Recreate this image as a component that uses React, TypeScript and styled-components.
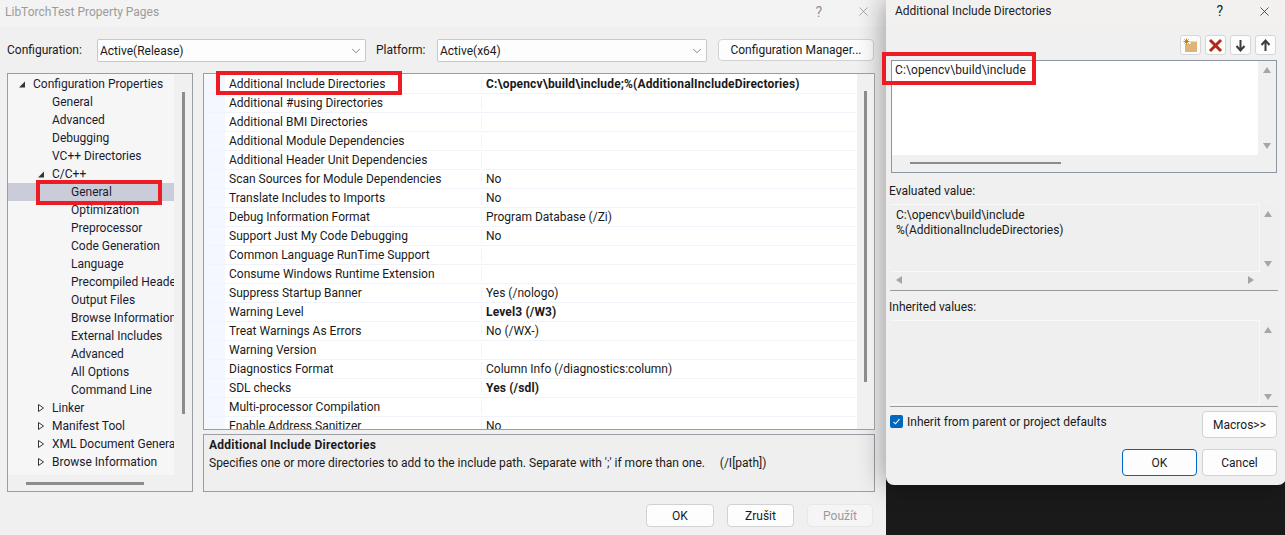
import { ChevronDown, X } from "lucide-react";
import styled, { createGlobalStyle } from "styled-components";

const treeItems = [
  { label: "Configuration Properties", level: 0, arrow: "open" },
  { label: "General", level: 1 },
  { label: "Advanced", level: 1 },
  { label: "Debugging", level: 1 },
  { label: "VC++ Directories", level: 1 },
  { label: "C/C++", level: 1, arrow: "open" },
  { label: "General", level: 2, selected: true },
  { label: "Optimization", level: 2 },
  { label: "Preprocessor", level: 2 },
  { label: "Code Generation", level: 2 },
  { label: "Language", level: 2 },
  { label: "Precompiled Headers", level: 2 },
  { label: "Output Files", level: 2 },
  { label: "Browse Information", level: 2 },
  { label: "External Includes", level: 2 },
  { label: "Advanced", level: 2 },
  { label: "All Options", level: 2 },
  { label: "Command Line", level: 2 },
  { label: "Linker", level: 1, arrow: "closed" },
  { label: "Manifest Tool", level: 1, arrow: "closed" },
  { label: "XML Document Generator", level: 1, arrow: "closed" },
  { label: "Browse Information", level: 1, arrow: "closed" },
];

const properties = [
  { name: "Additional Include Directories", value: "C:\\opencv\\build\\include;%(AdditionalIncludeDirectories)", bold: true },
  { name: "Additional #using Directories", value: "" },
  { name: "Additional BMI Directories", value: "" },
  { name: "Additional Module Dependencies", value: "" },
  { name: "Additional Header Unit Dependencies", value: "" },
  { name: "Scan Sources for Module Dependencies", value: "No" },
  { name: "Translate Includes to Imports", value: "No" },
  { name: "Debug Information Format", value: "Program Database (/Zi)" },
  { name: "Support Just My Code Debugging", value: "No" },
  { name: "Common Language RunTime Support", value: "" },
  { name: "Consume Windows Runtime Extension", value: "" },
  { name: "Suppress Startup Banner", value: "Yes (/nologo)" },
  { name: "Warning Level", value: "Level3 (/W3)", bold: true },
  { name: "Treat Warnings As Errors", value: "No (/WX-)" },
  { name: "Warning Version", value: "" },
  { name: "Diagnostics Format", value: "Column Info (/diagnostics:column)" },
  { name: "SDL checks", value: "Yes (/sdl)", bold: true },
  { name: "Multi-processor Compilation", value: "" },
  { name: "Enable Address Sanitizer", value: "No" },
];

const App = () => {
  return (
    <Page>
      <GlobalStyle />
      <MainWindow>
        <TitleBar>
          <MainTitle>LibTorchTest Property Pages</MainTitle>
          <TitleActions $gap={34} $right={15}>
            <HelpMark $muted>?</HelpMark>
            <X size={15} strokeWidth={1.2} color="#8f8f8f" />
          </TitleActions>
        </TitleBar>
        <ConfigRow>
          <ConfigLabel $width={90}>Configuration:</ConfigLabel>
          <SelectBox $width={269}>
            Active(Release)
            <ChevronDown size={14} strokeWidth={1.2} color="#555" />
          </SelectBox>
          <ConfigLabel $width={61} $left={10}>Platform:</ConfigLabel>
          <SelectBox $width={270}>
            Active(x64)
            <ChevronDown size={14} strokeWidth={1.2} color="#555" />
          </SelectBox>
          <Button $width={156} $height={22} $left={11}>Configuration Manager...</Button>
        </ConfigRow>
        <Panels>
          <TreePanel>
            <TreeBody>
              {treeItems.map((item, index) => (
                <TreeRow key={index} $selected={item.selected}>
                  <TreeLabel $level={item.level}>
                    {item.arrow && (
                      <TreeArrow $level={item.level} viewBox="0 0 8 10" width="8" height="10">
                        {item.arrow === "open" ? (
                          <path d="M7 2.5V8.5H1z" fill="#333" />
                        ) : (
                          <path d="M1.5 1.5L6.5 5L1.5 8.5z" fill="#fff" stroke="#333" strokeWidth="1" />
                        )}
                      </TreeArrow>
                    )}
                    {item.label}
                  </TreeLabel>
                </TreeRow>
              ))}
            </TreeBody>
            <TreeVThumb />
            <TreeHThumb />
            <TreeMark />
          </TreePanel>
          <RightColumn>
            <GridPanel>
              <GridRows>
                {properties.map((prop) => (
                  <GridRow key={prop.name}>
                    <NameCell>{prop.name}</NameCell>
                    <ValueCell $bold={prop.bold}>{prop.value}</ValueCell>
                  </GridRow>
                ))}
              </GridRows>
              <GridScroll>
                <GridThumb />
              </GridScroll>
              <GridMark />
            </GridPanel>
            <DescriptionPanel>
              <DescriptionTitle>Additional Include Directories</DescriptionTitle>
              <DescriptionText>
                {"Specifies one or more directories to add to the include path. Separate with ';' if more than one.     (/I[path])"}
              </DescriptionText>
            </DescriptionPanel>
          </RightColumn>
        </Panels>
        <MainFooter>
          <Button $width={68} $height={23}>OK</Button>
          <Button $width={67} $height={23}>Zrušit</Button>
          <Button $width={66} $height={23} $disabled>Použít</Button>
        </MainFooter>
      </MainWindow>

      <SideColumn>
        <Dialog>
          <DialogTitleBar>
            <DialogTitle>Additional Include Directories</DialogTitle>
            <TitleActions $gap={34} $right={14}>
              <HelpMark>?</HelpMark>
              <X size={15} strokeWidth={1.2} color="#222" />
            </TitleActions>
          </DialogTitleBar>
          <DialogBody>
            <Toolbar>
              <ToolButton>
                <svg width="15" height="15" viewBox="0 0 15 15">
                  <path d="M2 6h5.5V3.5H14V14H2z" fill="#deb479" />
                  <path d="M3.5 0.5v6M0.5 3.5h6M1.4 1.4l4.2 4.2M5.6 1.4L1.4 5.6" stroke="#d0810f" strokeWidth="1" />
                </svg>
              </ToolButton>
              <ToolButton>
                <svg width="15" height="15" viewBox="0 0 15 15">
                  <path d="M2 2l11 11M13 2L2 13" stroke="#b02a1c" strokeWidth="3" />
                </svg>
              </ToolButton>
              <ToolButton>
                <svg width="13" height="13" viewBox="0 0 13 13">
                  <path d="M6.5 1v10M2.5 7l4 4.5 4-4.5" stroke="#3c3c3c" strokeWidth="2" fill="none" />
                </svg>
              </ToolButton>
              <ToolButton>
                <svg width="13" height="13" viewBox="0 0 13 13">
                  <path d="M6.5 12V2M2.5 6l4-4.5 4 4.5" stroke="#3c3c3c" strokeWidth="2" fill="none" />
                </svg>
              </ToolButton>
            </Toolbar>
            <EditorBox>
              <EditorPane>C:\opencv\build\include</EditorPane>
              <ScrollArrow $dir="up" $x={371} $y={6} />
              <ScrollArrow $dir="down" $x={371} $y={82} />
              <EditorThumb />
              <EditorMark />
            </EditorBox>
            <FieldLabel $top={8}>Evaluated value:</FieldLabel>
            <ValueBox>
              <ValuePane $height={68}>
                C:\opencv\build\include
                <br />
                %(AdditionalIncludeDirectories)
              </ValuePane>
              <ScrollArrow $dir="up" $x={374} $y={7} />
              <ScrollArrow $dir="down" $x={374} $y={57} />
              <ScrollArrow $dir="left" $x={6} $y={72} />
              <ScrollArrow $dir="right" $x={358} $y={72} />
            </ValueBox>
            <FieldLabel $top={6}>Inherited values:</FieldLabel>
            <ValueBox>
              <ValuePane $height={85} />
              <ScrollArrow $dir="up" $x={374} $y={7} />
              <ScrollArrow $dir="down" $x={374} $y={74} />
            </ValueBox>
            <OptionsRow>
              <CheckLabel>
                <CheckBox>
                  <svg width="13" height="13" viewBox="0 0 13 13">
                    <path d="M3.5 6.8l2 2 4-4.6" stroke="#fff" strokeWidth="1.1" fill="none" />
                  </svg>
                </CheckBox>
                Inherit from parent or project defaults
              </CheckLabel>
              <Button $width={75} $height={27}>Macros&gt;&gt;</Button>
            </OptionsRow>
            <DialogFooter>
              <Button $width={75} $height={27} $primary>OK</Button>
              <Button $width={75} $height={27}>Cancel</Button>
            </DialogFooter>
          </DialogBody>
        </Dialog>
      </SideColumn>
    </Page>
  );
};

const GlobalStyle = createGlobalStyle`
  html, body {
    margin: 0;
    padding: 0;
    background: #1a1a1a;
  }
  * {
    box-sizing: border-box;
  }
`;

const Page = styled.div`
  display: flex;
  width: 1285px;
  height: 535px;
  overflow: hidden;
  font-family: Roboto, "Liberation Sans", sans-serif;
  font-size: 12px;
  color: #1a1a1a;
`;

const MainWindow = styled.div`
  width: 886px;
  flex-shrink: 0;
  display: flex;
  flex-direction: column;
  background: #f0f0f0;
`;

const TitleBar = styled.div`
  height: 27px;
  display: flex;
  align-items: center;
  justify-content: space-between;
  padding: 0 0 4px 5px;
  background: #f3f3f3;
`;

const MainTitle = styled.span`
  color: #9b9b9b;
`;

const TitleActions = styled.div<{ $gap: number; $right: number }>`
  display: flex;
  align-items: center;
  gap: ${(p) => p.$gap}px;
  padding-right: ${(p) => p.$right}px;
`;

const HelpMark = styled.span<{ $muted?: boolean }>`
  font-size: 14px;
  margin-left: -2px;
  color: ${(p) => (p.$muted ? "#8f8f8f" : "#222")};
`;

const ConfigRow = styled.div`
  display: flex;
  align-items: flex-start;
  padding: 12px 0 0 7px;
  height: 46px;
  flex-shrink: 0;
`;

const ConfigLabel = styled.span<{ $width: number; $left?: number }>`
  width: ${(p) => p.$width}px;
  margin-left: ${(p) => p.$left || 0}px;
  line-height: 22px;
`;

const SelectBox = styled.div<{ $width: number }>`
  width: ${(p) => p.$width}px;
  height: 23px;
  display: flex;
  align-items: center;
  justify-content: space-between;
  padding: 0 2px 0 2px;
  background: #fdfdfd;
  border: 1px solid #c8c8c8;
  border-radius: 2px;
`;

const Button = styled.div<{
  $width: number;
  $height: number;
  $left?: number;
  $primary?: boolean;
  $disabled?: boolean;
}>`
  width: ${(p) => p.$width}px;
  height: ${(p) => p.$height}px;
  margin-left: ${(p) => p.$left || 0}px;
  flex-shrink: 0;
  display: flex;
  align-items: center;
  justify-content: center;
  border: 1px solid ${(p) => (p.$primary ? "#0067c0" : p.$disabled ? "#e8e8e8" : "#d2d2d2")};
  border-radius: 4px;
  background: ${(p) => (p.$disabled ? "#f5f5f5" : "#fdfdfd")};
  color: ${(p) => (p.$disabled ? "#9a9a9a" : "#1a1a1a")};
`;

const Panels = styled.div`
  display: flex;
  gap: 10px;
  padding: 0 11px 0 7px;
  height: 419px;
`;

const TreePanel = styled.div`
  position: relative;
  width: 186px;
  flex-shrink: 0;
  border: 1px solid #9a9ea4;
  background: #f0f0f0;
`;

const TreeBody = styled.div`
  width: 166px;
  height: 401px;
  overflow: hidden;
  padding-top: 1px;
  background: #f6f6f6;
`;

const TreeRow = styled.div<{ $selected?: boolean }>`
  height: 18px;
  display: flex;
  align-items: center;
  background: ${(p) => (p.$selected ? "#cbccd9" : "transparent")};
`;

const TreeLabel = styled.span<{ $level: number }>`
  position: relative;
  padding-left: ${(p) => 25 + p.$level * 19}px;
  white-space: nowrap;
  color: #1b1b30;
`;

const TreeArrow = styled.svg<{ $level: number }>`
  position: absolute;
  top: 50%;
  left: ${(p) => 10 + p.$level * 19}px;
  transform: translateY(-50%);
`;

const TreeVThumb = styled.div`
  position: absolute;
  left: 174px;
  top: 18px;
  width: 3px;
  height: 322px;
  background: #8c8c8c;
`;

const TreeHThumb = styled.div`
  position: absolute;
  left: 18px;
  top: 408px;
  width: 118px;
  height: 3px;
  background: #8c8c8c;
`;

const RedFrame = styled.div`
  position: absolute;
  border: 4px solid #ed1c24;
  pointer-events: none;
`;

const TreeMark = styled(RedFrame)`
  left: 28px;
  top: 106px;
  width: 126px;
  height: 25px;
`;

const RightColumn = styled.div`
  flex: 1;
  display: flex;
  flex-direction: column;
  gap: 4px;
`;

const GridPanel = styled.div`
  position: relative;
  height: 357px;
  display: flex;
  border: 1px solid #9a9ea4;
  background: #f0f0f0;
`;

const GridRows = styled.div`
  width: 653px;
  overflow: hidden;
  padding-top: 1px;
  background: #fff;
`;

const GridRow = styled.div`
  height: 19px;
  display: flex;
  align-items: center;
  background: linear-gradient(90deg, #f4f7fd 21px, #fff 21px);
  border-bottom: 1px solid #f0f3fa;
`;

const NameCell = styled.div`
  width: 278px;
  flex-shrink: 0;
  padding-left: 25px;
  white-space: nowrap;
  overflow: hidden;
  border-right: 1px solid #f0f3fa;
`;

const ValueCell = styled.div<{ $bold?: boolean }>`
  padding-left: 4px;
  font-weight: ${(p) => (p.$bold ? 700 : 400)};
  letter-spacing: ${(p) => (p.$bold ? "0.15px" : "0")};
`;

const GridScroll = styled.div`
  flex: 1;
  display: flex;
  justify-content: center;
  padding-top: 17px;
`;

const GridThumb = styled.div`
  width: 3px;
  height: 291px;
  background: #8c8c8c;
`;

const GridMark = styled(RedFrame)`
  left: 12px;
  top: -3px;
  width: 186px;
  height: 24px;
`;

const DescriptionPanel = styled.div`
  flex: 1;
  padding: 1px 5px;
  border: 1px solid #9a9ea4;
  background: #efefef;
`;

const DescriptionTitle = styled.div`
  height: 18px;
  line-height: 18px;
  font-weight: 700;
  letter-spacing: 0.25px;
`;

const DescriptionText = styled.div`
  height: 18px;
  line-height: 18px;
  white-space: pre;
`;

const MainFooter = styled.div`
  display: flex;
  justify-content: flex-end;
  gap: 13px;
  padding: 12px 13px 0 0;
`;

const SideColumn = styled.div`
  flex: 1;
  background: #1a1a1a;
`;

const Dialog = styled.div`
  height: 485px;
  display: flex;
  flex-direction: column;
  background: #f0f0f0;
  border-radius: 0 0 8px 8px;
  box-shadow: -3px 0 26px rgba(0, 0, 0, 0.35);
`;

const DialogTitleBar = styled(TitleBar)`
  height: 26px;
  padding-left: 9px;
  background: #f3f1f0;
`;

const DialogTitle = styled.span`
  color: #222;
`;

const DialogBody = styled.div`
  flex: 1;
  display: flex;
  flex-direction: column;
  padding: 9px 8px 0 4px;
`;

const Toolbar = styled.div`
  display: flex;
  justify-content: flex-end;
  gap: 4px;
  height: 20px;
  margin-bottom: 5px;
  padding-right: 2px;
`;

const ToolButton = styled.div`
  width: 21px;
  height: 20px;
  display: flex;
  align-items: center;
  justify-content: center;
  background: #fdfdfd;
  border: 1px solid #d6d6d6;
  border-radius: 3px;
`;

const EditorBox = styled.div`
  position: relative;
  height: 113px;
  margin-left: 1px;
  width: 386px;
  border: 1px solid #8c95a0;
  background: #f0f0f0;
`;

const EditorPane = styled.div`
  width: 366px;
  height: 94px;
  padding: 2px 3px;
  letter-spacing: 0.1px;
  background: #fff;
`;

const EditorThumb = styled.div`
  position: absolute;
  left: 18px;
  top: 101px;
  width: 151px;
  height: 2px;
  background: #8c8c8c;
`;

const EditorMark = styled(RedFrame)`
  left: -10px;
  top: -9px;
  width: 154px;
  height: 33px;
`;

const FieldLabel = styled.div<{ $top: number }>`
  height: 20px;
  line-height: 20px;
  margin-top: ${(p) => p.$top}px;
  margin-bottom: 3px;
  margin-left: -1px;
`;

const ValueBox = styled.div`
  position: relative;
  height: 87px;
  width: 388px;
  border-bottom: 1px solid #9a9a9a;
  background: #efefef;
`;

const ValuePane = styled.div<{ $height: number }>`
  width: 370px;
  height: ${(p) => p.$height}px;
  padding: 3px 5px;
  line-height: 15px;
  border: 1px solid #f8f8f8;
  border-left-color: #efefef;
`;

const ScrollArrow = styled.i<{ $dir: "up" | "down" | "left" | "right"; $x: number; $y: number }>`
  position: absolute;
  left: ${(p) => p.$x}px;
  top: ${(p) => p.$y}px;
  width: 0;
  height: 0;
  ${(p) =>
    p.$dir === "up"
      ? "border-left: 4px solid transparent; border-right: 4px solid transparent; border-bottom: 6px solid #a6a6a6;"
      : p.$dir === "down"
        ? "border-left: 4px solid transparent; border-right: 4px solid transparent; border-top: 6px solid #a6a6a6;"
        : p.$dir === "left"
          ? "border-top: 4px solid transparent; border-bottom: 4px solid transparent; border-right: 6px solid #a6a6a6;"
          : "border-top: 4px solid transparent; border-bottom: 4px solid transparent; border-left: 6px solid #a6a6a6;"}
`;

const OptionsRow = styled.div`
  display: flex;
  justify-content: space-between;
  align-items: flex-start;
  padding-top: 4px;
  width: 387px;
`;

const CheckLabel = styled.div`
  display: flex;
  align-items: center;
  gap: 4px;
  height: 15px;
  margin-top: 3px;
`;

const CheckBox = styled.span`
  width: 13px;
  height: 13px;
  display: flex;
  border-radius: 2px;
  background: #0067c0;
`;

const DialogFooter = styled.div`
  display: flex;
  justify-content: flex-end;
  gap: 5px;
  padding-top: 11px;
  width: 387px;
`;

export default App;
